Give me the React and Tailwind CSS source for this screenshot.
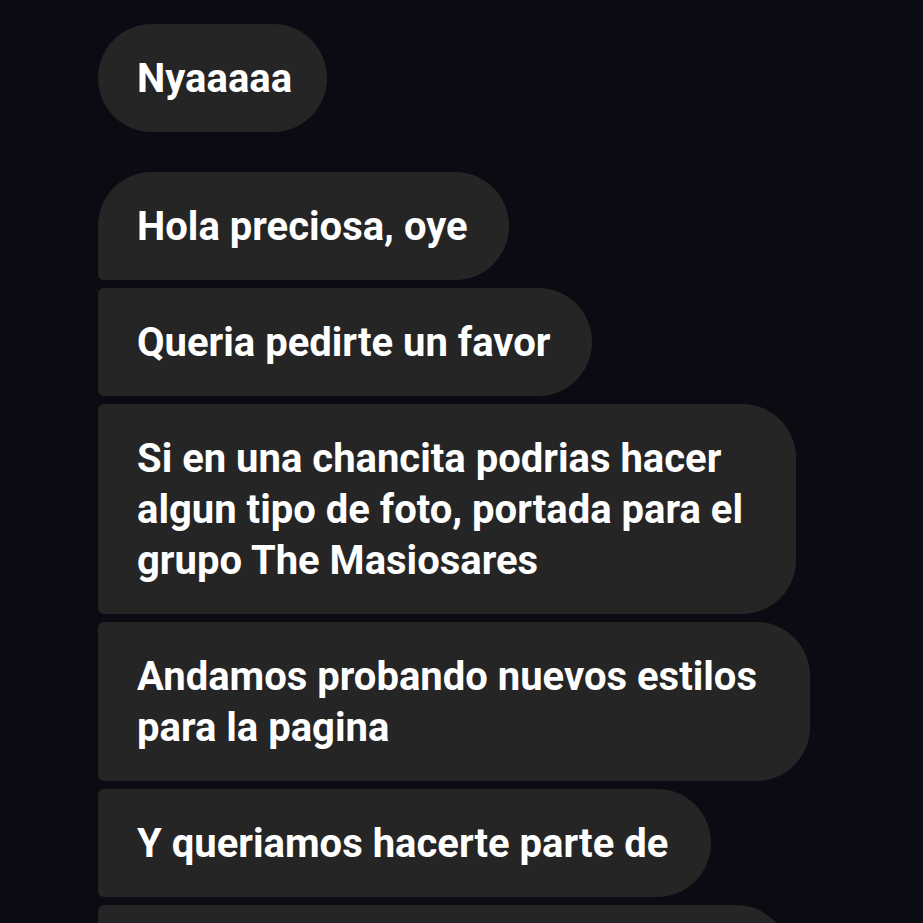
export default function App() {
  const font = { fontFamily: 'Roboto, "Noto Sans", sans-serif' };
  const base =
    "self-start bg-[#252525] text-white font-bold text-[40px] leading-[51px] pl-[39px] pt-[29px] pb-[28px]";
  return (
    <div
      className="w-[923px] h-[923px] overflow-hidden bg-[#0b0c13] pl-[98px] pt-[24px] flex flex-col"
      style={font}
    >
      <div className={`${base} pr-[35px] rounded-[54px]`}>Nyaaaaa</div>
      <div className="flex flex-col gap-2 mt-[40px]">
        <div className={`${base} pr-[41px] rounded-[54px] rounded-bl-[6px]`}>Hola preciosa, oye</div>
        <div className={`${base} pr-[42px] rounded-r-[54px] rounded-l-[6px]`}>Queria pedirte un favor</div>
        <div className={`${base} pr-[38px] rounded-r-[54px] rounded-l-[6px] w-[698px]`}>
          Si en una chancita podrias hacer algun tipo de foto, portada para el grupo The Masiosares
        </div>
        <div className={`${base} pr-[38px] rounded-r-[54px] rounded-l-[6px] w-[712px]`}>
          Andamos probando nuevos estilos para la pagina
        </div>
        <div className={`${base} pr-[43px] rounded-r-[54px] rounded-l-[6px]`}>Y queriamos hacerte parte de</div>
        <div className={`${base} pr-[38px] rounded-r-[54px] rounded-l-[6px] w-[692px]`}>esto, si tienes chancita</div>
      </div>
    </div>
  );
}
